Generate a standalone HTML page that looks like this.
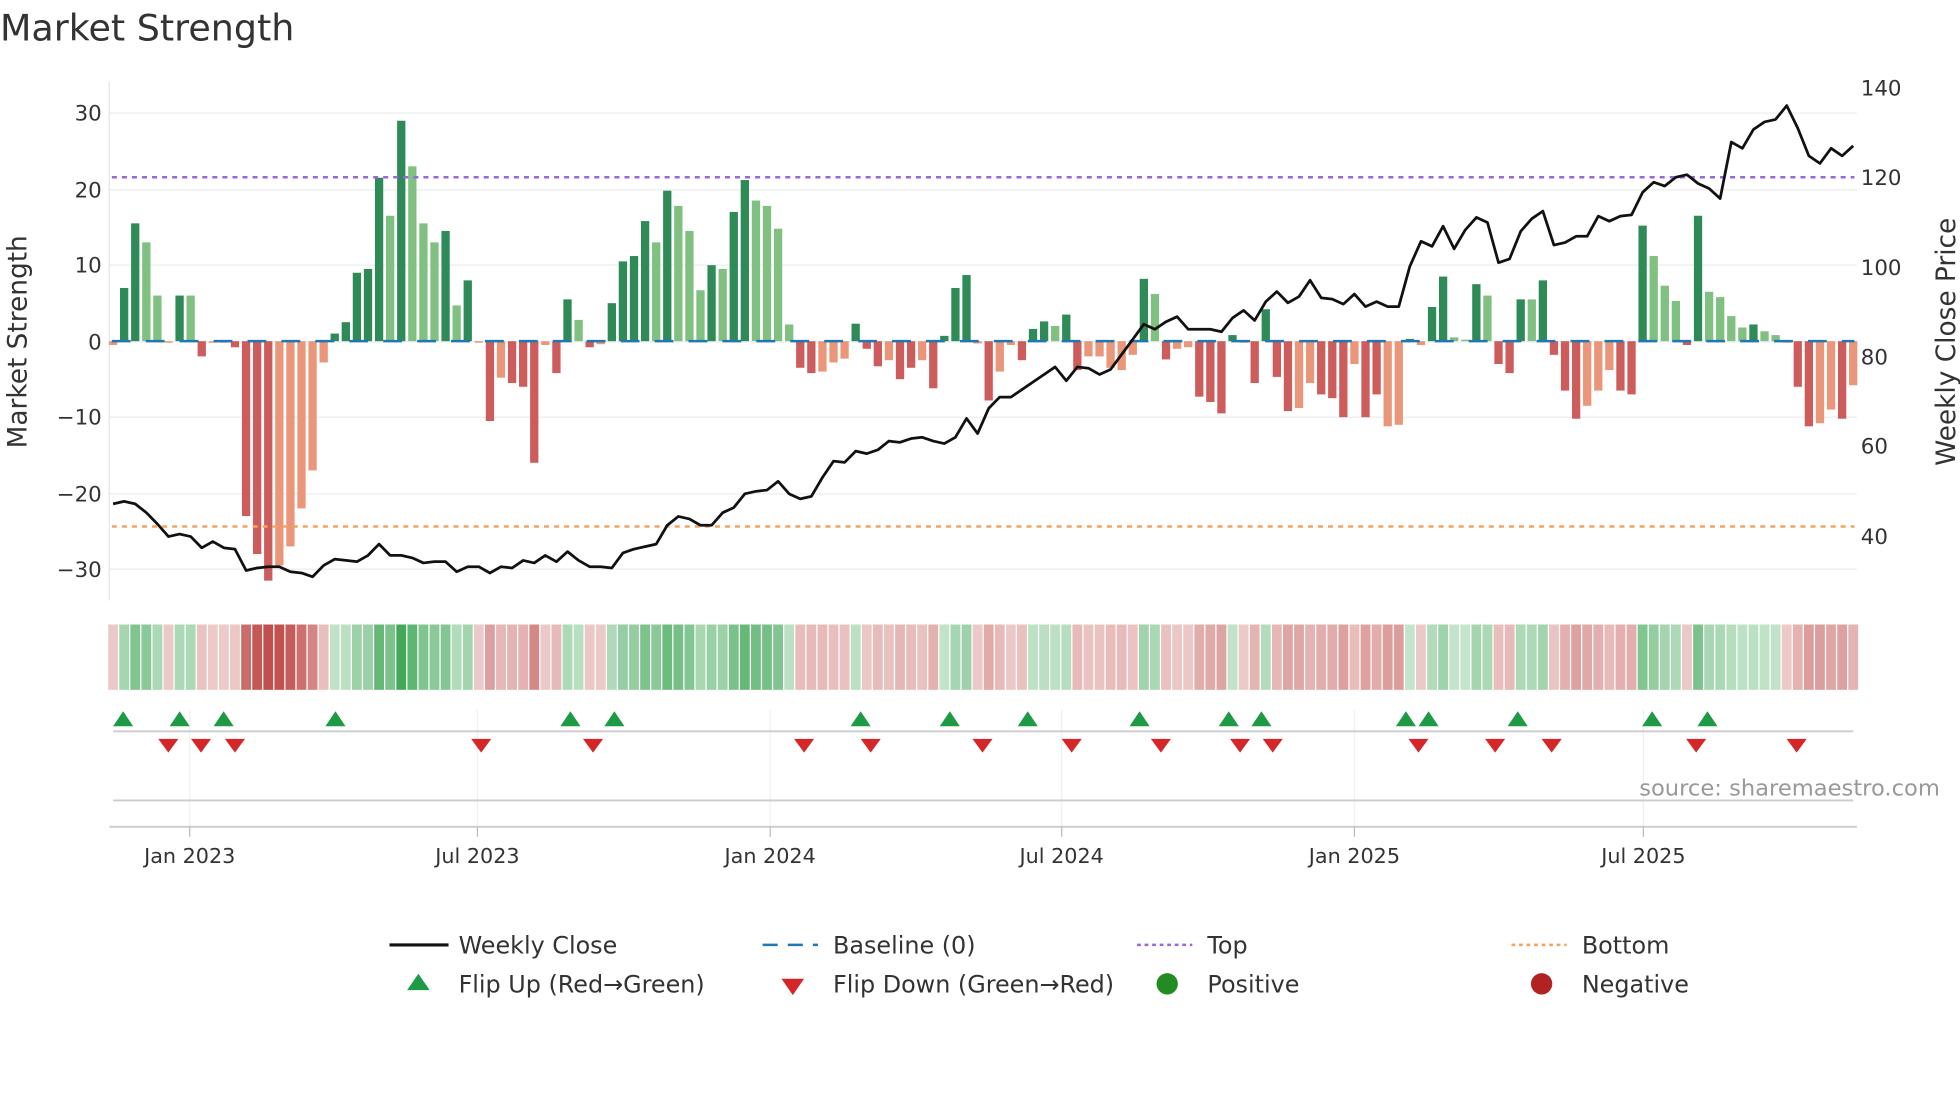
<!DOCTYPE html>
<html><head><meta charset="utf-8"><style>
html,body{margin:0;padding:0;background:#fff;}
svg{display:block;font-family:"DejaVu Sans","Liberation Sans",sans-serif;}
</style></head><body>
<svg id="s" width="1960" height="1102" viewBox="0 0 1560 877" xmlns="http://www.w3.org/2000/svg">
<rect width="1560" height="877" fill="#fff"/>
<text x="0" y="32" font-size="29" fill="#333">Market Strength</text>
<g id="grid"></g>
<line x1="87" y1="65" x2="87" y2="478" stroke="#e6e6e6" stroke-width="1"/>
<g font-size="17" fill="#333" text-anchor="end">
<text x="81" y="96">30</text><text x="81" y="157">20</text><text x="81" y="217">10</text><text x="81" y="278">0</text>
<text x="81" y="338">−10</text><text x="81" y="399">−20</text><text x="81" y="459">−30</text>
</g>
<g font-size="17" fill="#333">
<text x="1481" y="76">140</text><text x="1481" y="147">120</text><text x="1481" y="219">100</text><text x="1481" y="290">80</text>
<text x="1481" y="361">60</text><text x="1481" y="433">40</text>
</g>
<text transform="translate(21,272) rotate(-90)" font-size="21" fill="#333" text-anchor="middle">Market Strength</text>
<text transform="translate(1556,272) rotate(-90)" font-size="21" fill="#333" text-anchor="middle">Weekly Close Price</text>
<g id="bars"></g>
<line x1="89" y1="271.5" x2="1476" y2="271.5" stroke="#1f77b4" stroke-width="2" stroke-dasharray="15 12"/>
<line x1="89" y1="141" x2="1476" y2="141" stroke="#9966dd" stroke-width="2" stroke-dasharray="4 4"/>
<line x1="89" y1="419" x2="1476" y2="419" stroke="#f4a460" stroke-width="2" stroke-dasharray="4 4"/>
<polyline id="close" fill="none" stroke="#111" stroke-width="2.2" stroke-linejoin="round"/>
<g id="heat"></g>
<g stroke="#eef0f2" stroke-width="1">
<line x1="151" y1="565" x2="151" y2="658"/><line x1="380" y1="565" x2="380" y2="658"/><line x1="613" y1="565" x2="613" y2="658"/>
<line x1="845" y1="565" x2="845" y2="658"/><line x1="1078" y1="565" x2="1078" y2="658"/><line x1="1308" y1="565" x2="1308" y2="658"/>
</g>
<line x1="90" y1="582" x2="1475" y2="582" stroke="#ccc" stroke-width="1.5"/>
<line x1="90" y1="637" x2="1475" y2="637" stroke="#ccc" stroke-width="1.5"/>
<line x1="87" y1="658" x2="1478" y2="658" stroke="#ccc" stroke-width="1.5"/>
<g stroke="#bbb" stroke-width="1">
<line x1="151" y1="658" x2="151" y2="666"/><line x1="380" y1="658" x2="380" y2="666"/><line x1="613" y1="658" x2="613" y2="666"/>
<line x1="845" y1="658" x2="845" y2="666"/><line x1="1078" y1="658" x2="1078" y2="666"/><line x1="1308" y1="658" x2="1308" y2="666"/>
</g>
<g id="tri"></g>
<text x="1544" y="633" font-size="18" fill="#999" text-anchor="end">source: sharemaestro.com</text>
<g font-size="16.5" fill="#333" text-anchor="middle">
<text x="151" y="687">Jan 2023</text><text x="380" y="687">Jul 2023</text><text x="613" y="687">Jan 2024</text>
<text x="845" y="687">Jul 2024</text><text x="1078" y="687">Jan 2025</text><text x="1308" y="687">Jul 2025</text>
</g>
<g font-size="19" fill="#333">
<line x1="310" y1="752" x2="357" y2="752" stroke="#111" stroke-width="2.5"/>
<text x="365" y="759">Weekly Close</text>
<line x1="607" y1="752" x2="651" y2="752" stroke="#1f77b4" stroke-width="2" stroke-dasharray="12 8"/>
<text x="663" y="759">Baseline (0)</text>
<line x1="905" y1="752" x2="949" y2="752" stroke="#9966dd" stroke-width="2" stroke-dasharray="3 3"/>
<text x="961" y="759">Top</text>
<line x1="1203" y1="752" x2="1247" y2="752" stroke="#f4a460" stroke-width="2" stroke-dasharray="3 3"/>
<text x="1259" y="759">Bottom</text>
<polygon points="333,775 324,788 342,788" fill="#1f9a44"/>
<text x="365" y="790">Flip Up (Red→Green)</text>
<polygon points="622,779 640,779 631,792" fill="#d62728"/>
<text x="663" y="790">Flip Down (Green→Red)</text>
<circle cx="929" cy="783" r="8.5" fill="#228b22"/>
<text x="961" y="790">Positive</text>
<circle cx="1227" cy="783" r="8.5" fill="#b22222"/>
<text x="1259" y="790">Negative</text>
</g>
</svg>
<script>
var NS="http://www.w3.org/2000/svg";
function el(t,a,p){var e=document.createElementNS(NS,t);for(var k in a)e.setAttribute(k,a[k]);document.getElementById(p).appendChild(e);return e;}
[90,151,211,272,332,393,453].forEach(function(y){el("line",{x1:87,x2:1478,y1:y,y2:y,stroke:"#eef0f2","stroke-width":1.2},"grid");});
var d="r-0.5 G7 G15.5 g13 g6 r-0.2 G6 g6 R-2 r0 r-0.1 R-0.8 R-23 R-28 R-31.5 r-29.5 r-27 r-22 r-17 r-2.8 G1 G2.5 G9 G9.5 G21.5 g16.5 G29 g23 g15.5 g13 G14.5 g4.7 G8 r0 R-10.5 r-4.8 R-5.5 R-6 R-16 r-0.5 R-4.2 G5.5 g2.8 R-0.8 r-0.4 G5 G10.5 G11.2 G15.8 g13 G19.8 g17.8 g14.5 g6.7 G10 g9.5 G17 G21.2 g18.5 g17.8 g14.8 g2.2 R-3.5 R-4.2 r-4 r-2.8 r-2.3 G2.3 R-1 R-3.3 r-2.5 R-5 R-3.5 r-2.5 R-6.2 G0.7 G7 G8.7 r-0.3 R-7.8 r-4 r-0.5 R-2.5 G1.6 G2.6 g2 G3.5 R-3.8 r-2 r-2 r-3.5 r-3.8 r-1.8 G8.2 g6.2 R-2.4 r-1 r-0.8 R-7.3 R-8 R-9.5 G0.8 r0 R-5.5 G4.2 R-4.7 R-9.2 r-8.8 r-5.5 R-7 R-7.5 R-10 r-3 R-10 R-7 r-11.2 r-11 G0.3 r-0.5 G4.5 G8.5 g0.5 g0.2 G7.5 g6 R-3 R-4.2 G5.5 g5.5 G8 R-1.8 R-6.5 R-10.2 r-8.5 r-6.5 r-3.8 R-6.5 R-7 G15.2 g11.2 g7.3 g5.3 R-0.5 G16.5 g6.5 g5.8 g3.3 g1.8 G2.2 g1.3 g0.8 r0 R-6 R-11.2 r-10.8 r-9 R-10.2 r-5.8".split(" ");
var col={G:"#2e8b57",g:"#80c080",R:"#cd5c5c",r:"#e9967a"};
var n=d.length,x0=90,dx=(1475-90)/(n-1);
d.forEach(function(s,i){
 var t=s[0],v=parseFloat(s.slice(1)),cx=x0+dx*i,z=271.5,h=v*6.05;
 var y=h>0?z-h:z, hh=Math.max(Math.abs(h),1.2);
 el("rect",{x:cx-3.3,y:y,width:6.6,height:hh,fill:col[t]},"bars");
 var a=Math.min(Math.abs(v)/30,1),pos=(t=="G"||t=="g");
 var op=0.3+0.7*a;
 el("rect",{x:cx-dx/2+0.5,y:497,width:dx-1,height:52,fill:pos?"#3fa656":"#c0504d","fill-opacity":op},"heat");
});
var ys=[401,399,401,408,417,427,425,427,436,431,436,437,454,452,451,451,455,456,459,450,445,446,447,442,433,442,442,444,448,447,447,455,451,451,456,451,452,446,448,442,447,439,446,451,451,452,440,437,435,433,418,411,413,418,418,408,404,393,391,390,383,393,397,395,380,367,368,359,361,358,351,352,349,348,351,353,348,333,345,325,316,316,310,304,298,292,303,292,293,298,294,282,270,258,262,256,252,262,262,262,264,253,247,255,240,232,241,236,223,237,238,242,234,244,240,244,244,212,192,196,180,198,183,173,177,209,206,184,174,168,195,193,188,188,172,176,172,171,153,145,148,141,139,146,150,158,113,118,103,97,95,84,102,124,130,118,124,116];
var pts=ys.map(function(y,i){return (x0+(1475-90)/(ys.length-1)*i).toFixed(1)+","+y;}).join(" ");
document.getElementById("close").setAttribute("points",pts);
[98,143,178,267,454,489,685,756,818,907,978,1004,1119,1137,1208,1315,1359].forEach(function(x){el("polygon",{points:(x)+",566 "+(x-8)+",578 "+(x+8)+",578",fill:"#1f9a44"},"tri");});
[134,160,187,383,472,640,693,782,853,924,987,1013,1129,1190,1235,1350,1430].forEach(function(x){el("polygon",{points:(x-8)+",588 "+(x+8)+",588 "+x+",599",fill:"#d62728"},"tri");});
</script>
</body></html>
